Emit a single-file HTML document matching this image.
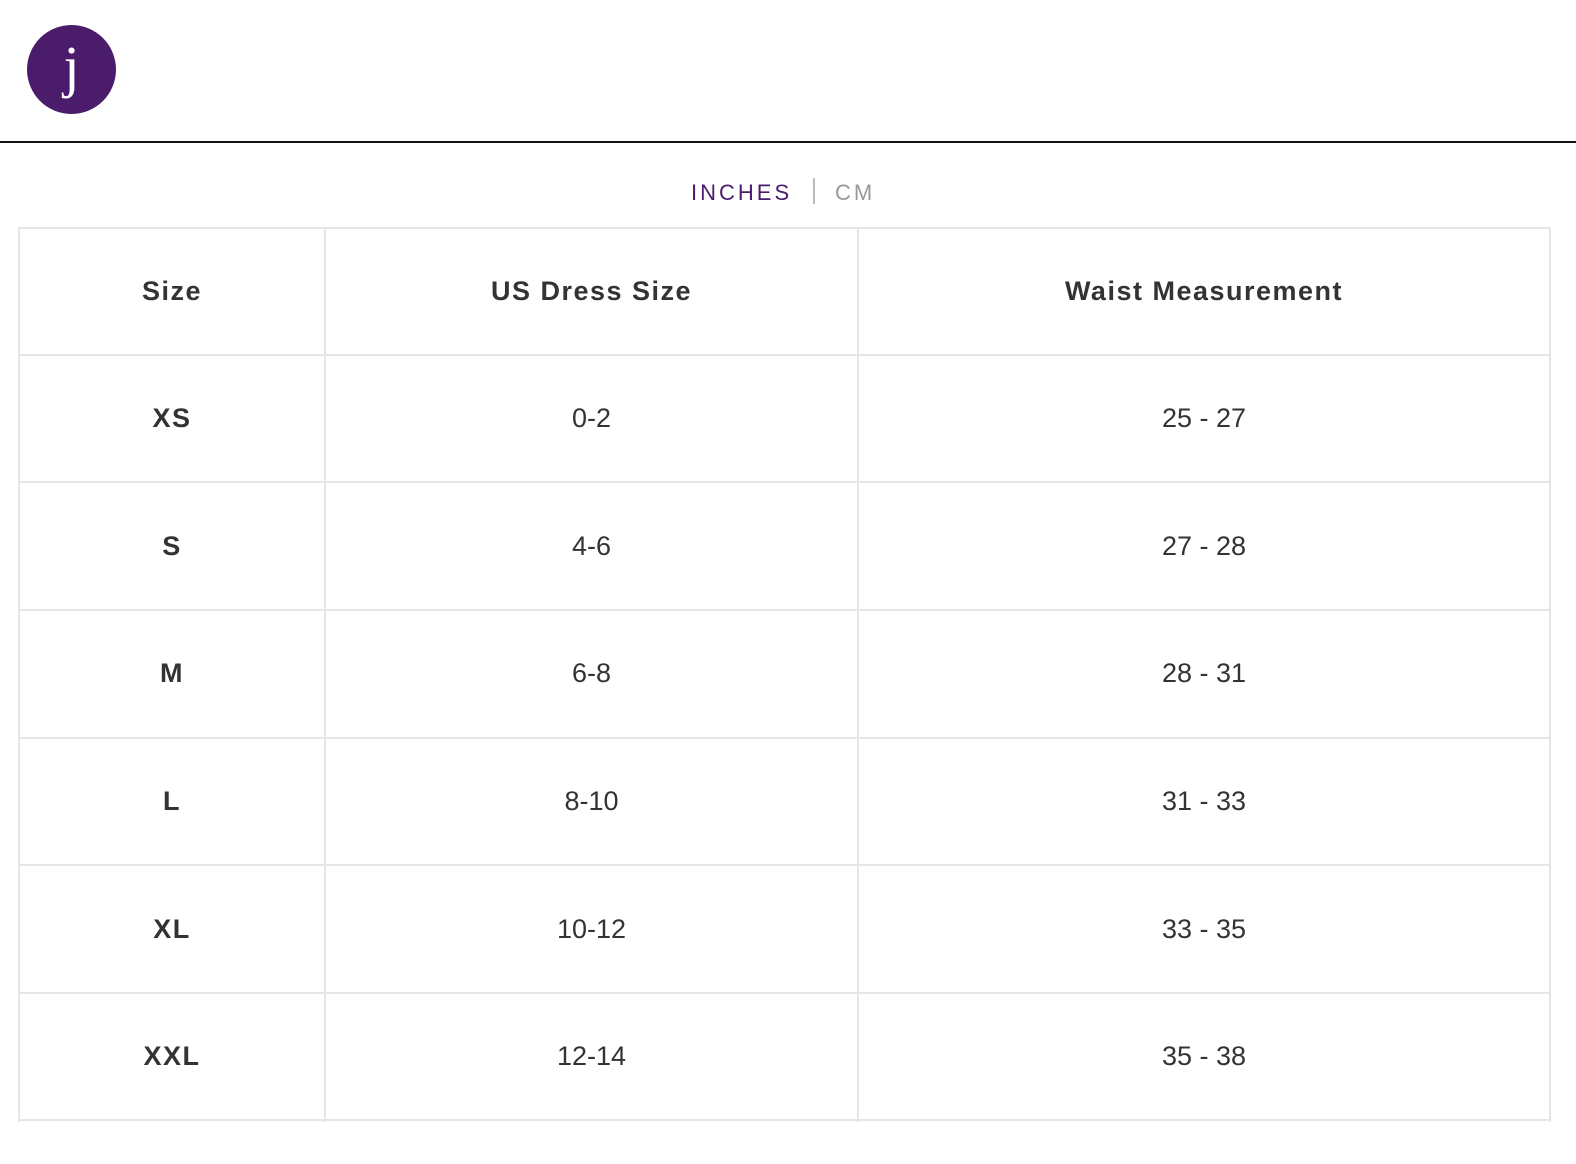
<!DOCTYPE html>
<html><head><meta charset="utf-8"><style>
html,body{margin:0;padding:0;background:#fff;width:1576px;height:1164px;overflow:hidden;font-family:"Liberation Sans",sans-serif;position:relative;}
.logo{position:absolute;left:27px;top:25px;width:89px;height:89px;border-radius:50%;background:#4b1b6c;color:#fff;font-family:"Liberation Serif",serif;font-size:58px;text-align:center;line-height:84px;}
.hr{position:absolute;left:0;top:141px;width:1576px;height:2px;background:#111;}
.units{position:absolute;top:180px;left:0;width:1576px;height:30px;font-size:22px;letter-spacing:3px;}
.units .in{position:absolute;left:691px;top:0;color:#4b1b6c;}
.units .sep{position:absolute;left:813px;top:-2px;width:2px;height:26px;background:#bbb;}
.units .cm{position:absolute;left:835px;top:0;color:#999;}
.v{position:absolute;top:227px;width:2px;height:895px;background:#e6e6e6;}
.h{position:absolute;left:18px;width:1533px;height:2px;background:#e6e6e6;}
.c{position:absolute;text-align:center;font-size:27px;color:#333;line-height:30px;}
.b{font-weight:bold;letter-spacing:1.5px;}
</style></head><body>
<div class="logo">j</div>
<div class="hr"></div>
<div class="units"><span class="in">INCHES</span><span class="sep"></span><span class="cm">CM</span></div>
<div class="v" style="left:18px"></div><div class="v" style="left:324px"></div><div class="v" style="left:857px"></div><div class="v" style="left:1549px"></div>
<div class="h" style="top:227px"></div><div class="h" style="top:354px"></div><div class="h" style="top:481px"></div><div class="h" style="top:609px"></div><div class="h" style="top:737px"></div><div class="h" style="top:864px"></div><div class="h" style="top:992px"></div><div class="h" style="top:1119px"></div>
<div style="position:absolute;left:0;top:0">
<div class="c b" style="left:20px;width:304px;top:276px">Size</div>
<div class="c b" style="left:326px;width:531px;top:276px">US Dress Size</div>
<div class="c b" style="left:859px;width:690px;top:276px">Waist Measurement</div>

<div class="c b" style="left:20px;width:304px;top:403px">XS</div>
<div class="c" style="left:326px;width:531px;top:403px">0-2</div>
<div class="c" style="left:859px;width:690px;top:403px">25 - 27</div>

<div class="c b" style="left:20px;width:304px;top:531px">S</div>
<div class="c" style="left:326px;width:531px;top:531px">4-6</div>
<div class="c" style="left:859px;width:690px;top:531px">27 - 28</div>

<div class="c b" style="left:20px;width:304px;top:658px">M</div>
<div class="c" style="left:326px;width:531px;top:658px">6-8</div>
<div class="c" style="left:859px;width:690px;top:658px">28 - 31</div>

<div class="c b" style="left:20px;width:304px;top:786px">L</div>
<div class="c" style="left:326px;width:531px;top:786px">8-10</div>
<div class="c" style="left:859px;width:690px;top:786px">31 - 33</div>

<div class="c b" style="left:20px;width:304px;top:914px">XL</div>
<div class="c" style="left:326px;width:531px;top:914px">10-12</div>
<div class="c" style="left:859px;width:690px;top:914px">33 - 35</div>

<div class="c b" style="left:20px;width:304px;top:1041px">XXL</div>
<div class="c" style="left:326px;width:531px;top:1041px">12-14</div>
<div class="c" style="left:859px;width:690px;top:1041px">35 - 38</div>
</div>
</body></html>
